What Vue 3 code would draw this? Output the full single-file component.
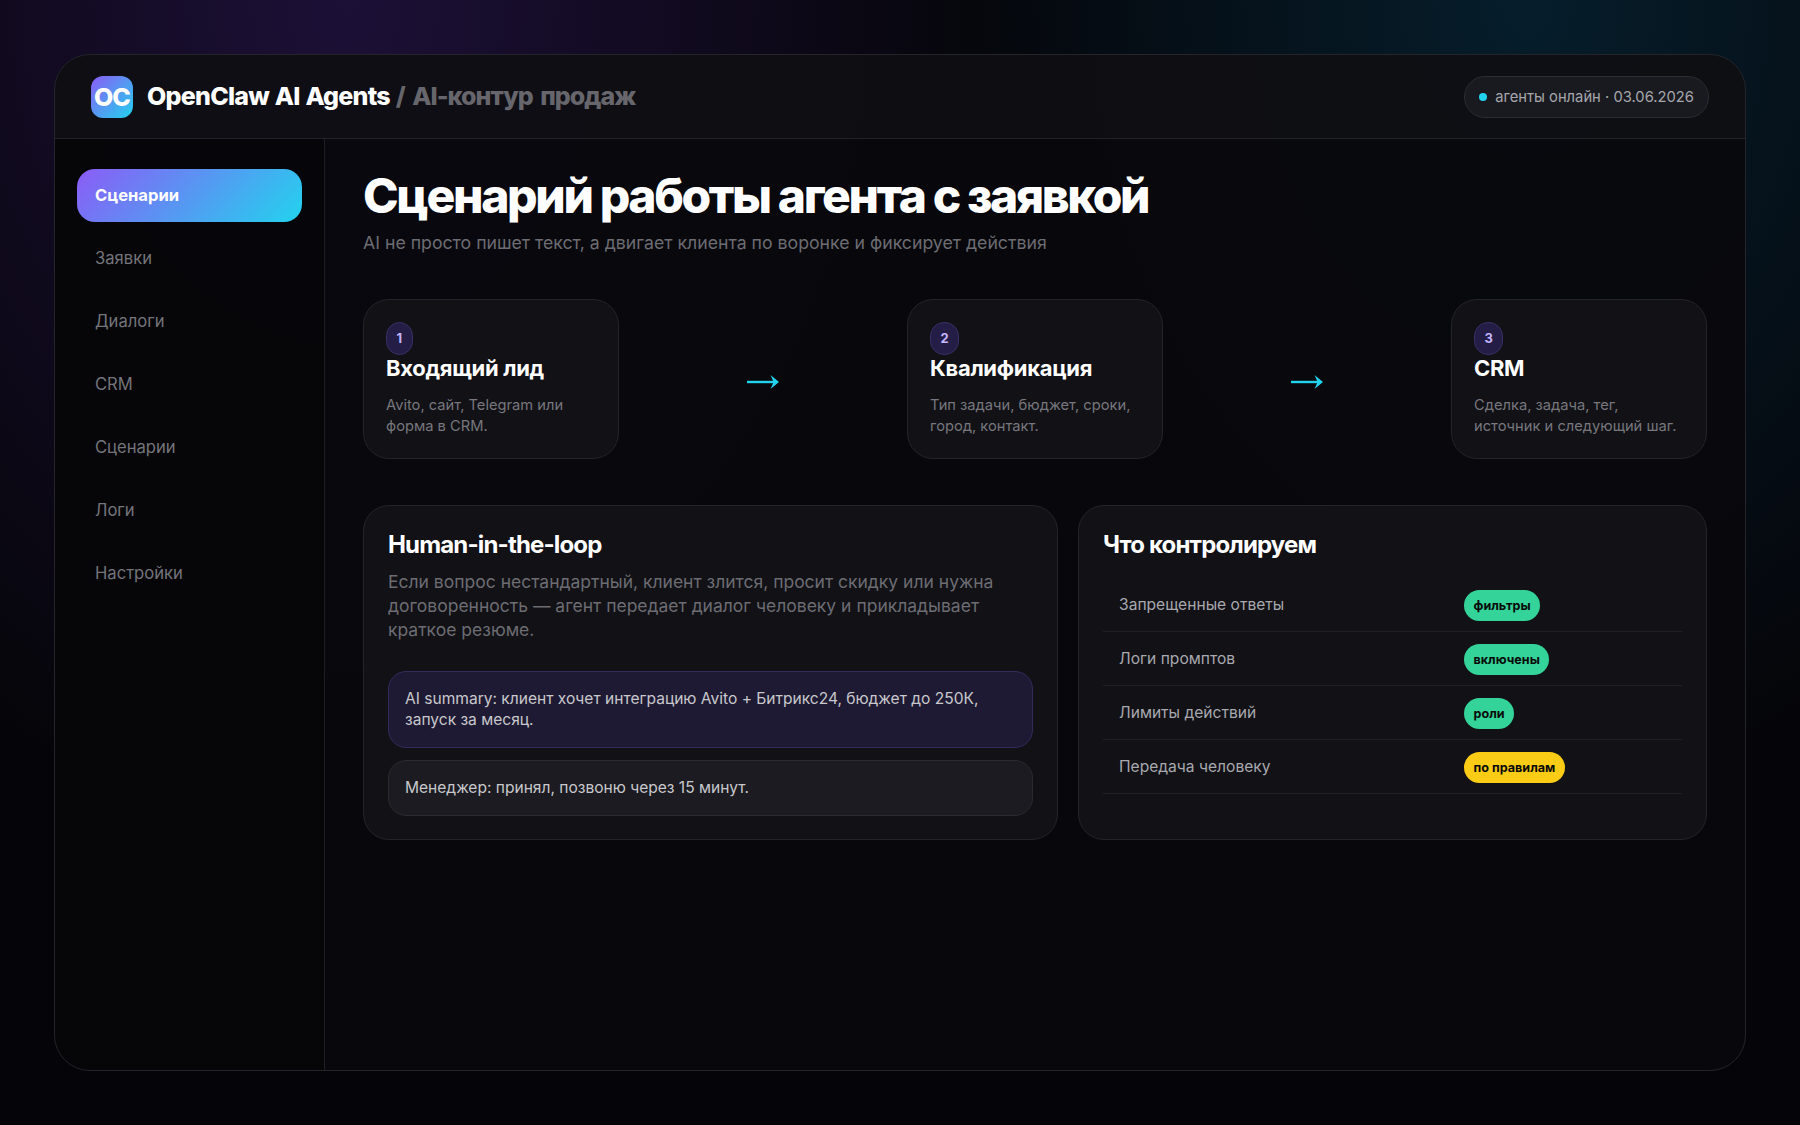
<script setup>
const nav = ['Сценарии', 'Заявки', 'Диалоги', 'CRM', 'Сценарии', 'Логи', 'Настройки']

const steps = [
  { n: 1, title: 'Входящий лид', text: 'Avito, сайт, Telegram или форма в CRM.' },
  { n: 2, title: 'Квалификация', text: 'Тип задачи, бюджет, сроки, город, контакт.' },
  { n: 3, title: 'CRM', text: 'Сделка, задача, тег, источник и следующий шаг.' }
]

const controls = [
  { label: 'Запрещенные ответы', tag: 'фильтры', kind: 'green' },
  { label: 'Логи промптов', tag: 'включены', kind: 'green' },
  { label: 'Лимиты действий', tag: 'роли', kind: 'green' },
  { label: 'Передача человеку', tag: 'по правилам', kind: 'yellow' }
]
</script>

<template>
  <div class="page">
    <div class="shell">
      <header class="topbar">
        <div class="brand">
          <div class="logo">OC</div>
          <div class="brand-name">OpenClaw AI Agents <span>/ AI-контур продаж</span></div>
        </div>
        <div class="status">
          <i class="dot"></i>
          агенты онлайн · 03.06.2026
        </div>
      </header>

      <div class="body">
        <aside class="sidebar">
          <div v-for="(item, i) in nav" :key="i" class="nav-item" :class="{ active: i === 0 }">{{ item }}</div>
        </aside>

        <main class="content">
          <h1>Сценарий работы агента с заявкой</h1>
          <p class="sub">AI не просто пишет текст, а двигает клиента по воронке и фиксирует действия</p>

          <section class="flow">
            <template v-for="(step, i) in steps" :key="step.n">
              <div class="step">
                <span class="num">{{ step.n }}</span>
                <h3>{{ step.title }}</h3>
                <p>{{ step.text }}</p>
              </div>
              <svg v-if="i < steps.length - 1" class="arrow" viewBox="0 0 34 14" width="34" height="14">
                <rect x="1" y="5.8" width="28" height="2.4" fill="#22d3ee" />
                <path d="M24.5 0 L33 7 L24.5 14 L27.6 7 Z" fill="#22d3ee" />
              </svg>
            </template>
          </section>

          <section class="panels">
            <div class="panel">
              <h2>Human-in-the-loop</h2>
              <p class="lead">Если вопрос нестандартный, клиент злится, просит скидку или нужна договоренность — агент передает диалог человеку и прикладывает краткое резюме.</p>
              <div class="msg ai">AI summary: клиент хочет интеграцию Avito + Битрикс24, бюджет до 250К, запуск за месяц.</div>
              <div class="msg">Менеджер: принял, позвоню через 15 минут.</div>
            </div>

            <div class="panel">
              <h2>Что контролируем</h2>
              <div class="rows">
                <div v-for="row in controls" :key="row.label" class="row">
                  <span class="label">{{ row.label }}</span>
                  <span class="tag-cell"><span class="tag" :class="row.kind">{{ row.tag }}</span></span>
                </div>
              </div>
            </div>
          </section>
        </main>
      </div>
    </div>
  </div>
</template>

<style>
html,
body {
  margin: 0;
  background: #050509;
}
</style>

<style scoped>
.page {
  box-sizing: border-box;
  height: 1125px;
  padding: 54px;
  overflow: hidden;
  font-family: Inter, "Noto Sans", sans-serif;
  background:
    radial-gradient(660px 850px at 345px 0, rgba(124, 58, 237, 0.2), transparent 100%),
    radial-gradient(600px 800px at 1527px 0, rgba(10, 170, 240, 0.15), transparent 100%),
    #050509;
}

.shell {
  box-sizing: border-box;
  height: 100%;
  display: flex;
  flex-direction: column;
  border: 1px solid #24242a;
  border-radius: 36px;
  background: rgba(8, 8, 13, 0.95);
  overflow: hidden;
}

.topbar {
  flex: none;
  box-sizing: border-box;
  height: 84px;
  padding: 0 36px;
  display: flex;
  align-items: center;
  justify-content: space-between;
  background: rgba(255, 255, 255, 0.026);
  border-bottom: 1px solid #222228;
}

.brand {
  display: flex;
  align-items: center;
  gap: 14px;
}

.logo {
  width: 42px;
  height: 42px;
  border-radius: 12px;
  display: flex;
  align-items: center;
  justify-content: center;
  background: linear-gradient(135deg, #8b5cf6, #22d3ee);
  color: #fff;
  font-size: 25px;
  font-weight: 800;
  letter-spacing: -1px;
}

.brand-name {
  padding-bottom: 2px;
  color: #fff;
  font-size: 25px;
  font-weight: 800;
  letter-spacing: -0.75px;
  word-spacing: 1px;
}

.brand-name span {
  color: #66666c;
  letter-spacing: -0.95px;
  word-spacing: 3px;
}

.status {
  box-sizing: border-box;
  height: 42px;
  padding: 0 14px;
  display: flex;
  align-items: center;
  gap: 8px;
  border: 1px solid #2c2c33;
  border-radius: 21px;
  background: #191a20;
  color: #a6a6ac;
  font-size: 14.75px;
}

.dot {
  width: 8px;
  height: 8px;
  border-radius: 50%;
  background: #22d3ee;
}

.body {
  flex: 1;
  min-height: 0;
  display: flex;
}

.sidebar {
  flex: none;
  box-sizing: border-box;
  width: 270px;
  padding: 30px 22px;
  display: flex;
  flex-direction: column;
  gap: 10px;
  border-right: 1px solid #1e1e24;
  background: rgba(0, 0, 0, 0.25);
}

.nav-item {
  box-sizing: border-box;
  height: 53px;
  padding: 0 18px 2px;
  display: flex;
  align-items: center;
  border-radius: 18px;
  color: #74747a;
  font-size: 16.6px;
}

.nav-item.active {
  background: linear-gradient(135deg, #8b5cf6, #22d3ee);
  color: #fff;
  font-weight: 700;
}

.content {
  flex: 1;
  min-width: 0;
  padding: 28px 38px;
}

h1 {
  margin: 0;
  color: #fff;
  font-size: 48px;
  line-height: 58px;
  font-weight: 800;
  letter-spacing: -2.37px;
}

.sub {
  margin: 6px 0 0;
  color: #6c6c72;
  font-size: 17.7px;
  line-height: 24px;
}

.flow {
  margin-top: 44px;
  display: flex;
  align-items: center;
  justify-content: space-between;
}

.step {
  box-sizing: border-box;
  width: 256px;
  height: 160px;
  padding: 22px;
  border: 1px solid #23232a;
  border-radius: 26px;
  background: #111116;
}

.num {
  display: inline-block;
  padding: 0 9.5px;
  height: 31px;
  line-height: 31px;
  border: 1px solid #3a2f66;
  border-radius: 14px;
  background: #241d45;
  color: #c4b5fd;
  font-size: 13px;
  font-weight: 700;
}

.step h3 {
  margin: -1px 0 0;
  color: #fff;
  font-size: 22px;
  line-height: 28px;
  font-weight: 700;
  letter-spacing: -0.3px;
}

.step p {
  margin: 13px 0 0;
  color: #77777d;
  font-size: 14.7px;
  line-height: 21px;
}

.arrow {
  flex: none;
  margin-top: 6px;
}

.panels {
  margin-top: 46px;
  display: grid;
  grid-template-columns: 695px 1fr;
  gap: 20px;
}

.panel {
  box-sizing: border-box;
  height: 335px;
  padding: 24px;
  border: 1px solid #23232a;
  border-radius: 26px;
  background: #111116;
}

h2 {
  margin: 0;
  color: #fff;
  font-size: 24px;
  line-height: 30px;
  font-weight: 700;
  letter-spacing: -0.85px;
}

.lead {
  margin: 10px 0 0;
  color: #6c6c72;
  font-size: 17.5px;
  line-height: 24px;
}

.msg {
  margin-top: 12px;
  padding: 16px 16px 17px;
  border: 1px solid #2a2a30;
  border-radius: 18px;
  background: #1b1b21;
  color: #c8c8cc;
  font-size: 15.55px;
  line-height: 21px;
}

.msg.ai {
  margin-top: 29px;
  border-color: #352a5c;
  background: #1f1a33;
}

.rows {
  margin-top: 18px;
}

.row {
  box-sizing: border-box;
  height: 54px;
  padding-left: 16px;
  display: grid;
  grid-template-columns: 345px 1fr;
  align-items: center;
  border-bottom: 1px solid #1f1f25;
}

.label {
  color: #a8a8ae;
  font-size: 15.6px;
}

.tag-cell {
  padding-top: 2px;
}

.tag {
  display: inline-block;
  height: 31px;
  line-height: 31px;
  padding: 0 9.5px;
  border-radius: 16px;
  color: #0a0a0a;
  font-size: 12.6px;
  font-weight: 700;
}

.tag.green {
  background: #34d399;
}

.tag.yellow {
  background: #facc15;
}
</style>
